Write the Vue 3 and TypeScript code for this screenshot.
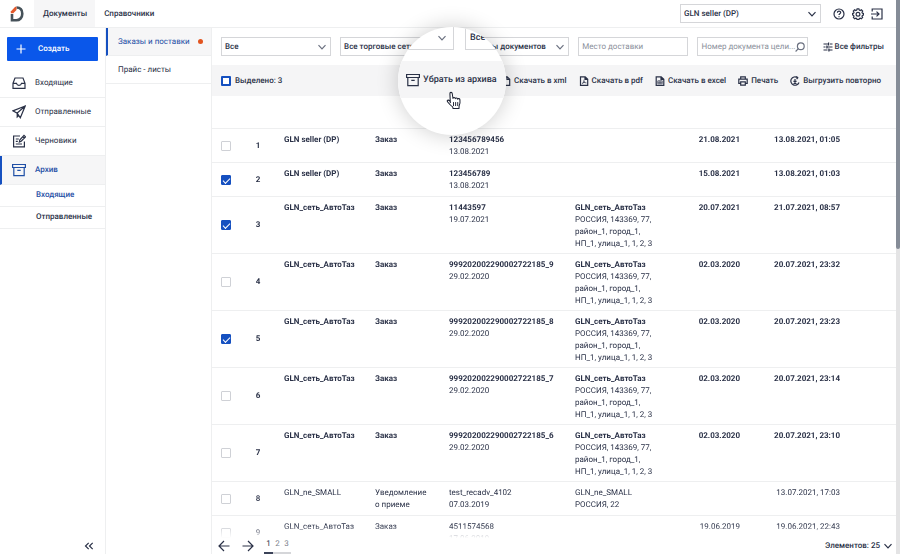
<script setup lang="ts">
import { ref } from 'vue'

interface Row {
  id: number
  checked: boolean
  unread: boolean
  sender: string
  type: string[]
  doc: string
  docDate: string
  place: string
  address: string[]
  delivery: string
  received: string
}

const net = 'GLN_сеть_АвтоТаз'
const fullAddress = ['РОССИЯ, 143369, 77,', 'район_1, город_1,', 'НП_1, улица_1, 1, 2, 3']

const rows = ref<Row[]>([
  { id: 1, checked: false, unread: true, sender: 'GLN seller (DP)', type: ['Заказ'], doc: '123456789456', docDate: '13.08.2021', place: '', address: [], delivery: '21.08.2021', received: '13.08.2021, 01:05' },
  { id: 2, checked: true, unread: true, sender: 'GLN seller (DP)', type: ['Заказ'], doc: '123456789', docDate: '13.08.2021', place: '', address: [], delivery: '15.08.2021', received: '13.08.2021, 01:03' },
  { id: 3, checked: true, unread: true, sender: net, type: ['Заказ'], doc: '11443597', docDate: '19.07.2021', place: net, address: fullAddress, delivery: '20.07.2021', received: '21.07.2021, 08:57' },
  { id: 4, checked: false, unread: true, sender: net, type: ['Заказ'], doc: '999202002290002722185_9', docDate: '29.02.2020', place: net, address: fullAddress, delivery: '02.03.2020', received: '20.07.2021, 23:32' },
  { id: 5, checked: true, unread: true, sender: net, type: ['Заказ'], doc: '999202002290002722185_8', docDate: '29.02.2020', place: net, address: fullAddress, delivery: '02.03.2020', received: '20.07.2021, 23:23' },
  { id: 6, checked: false, unread: true, sender: net, type: ['Заказ'], doc: '999202002290002722185_7', docDate: '29.02.2020', place: net, address: fullAddress, delivery: '02.03.2020', received: '20.07.2021, 23:14' },
  { id: 7, checked: false, unread: true, sender: net, type: ['Заказ'], doc: '999202002290002722185_6', docDate: '29.02.2020', place: net, address: fullAddress, delivery: '02.03.2020', received: '20.07.2021, 23:10' },
  { id: 8, checked: false, unread: false, sender: 'GLN_ne_SMALL', type: ['Уведомление', 'о приеме'], doc: 'test_recadv_4102', docDate: '07.03.2019', place: 'GLN_ne_SMALL', address: ['РОССИЯ, 22'], delivery: '', received: '13.07.2021, 17:03' },
  { id: 9, checked: false, unread: false, sender: net, type: ['Заказ'], doc: '4511574568', docDate: '17.06.2019', place: '', address: [], delivery: '19.06.2019', received: '19.06.2021, 22:43' },
])

const menu = [
  { label: 'Входящие', icon: 'inbox', active: false },
  { label: 'Отправленные', icon: 'send', active: false },
  { label: 'Черновики', icon: 'draft', active: false },
  { label: 'Архив', icon: 'archive', active: true },
]

const filters = ['Все', 'Все торговые сети', 'Все типы документов']

const actions = [
  { label: 'Скачать в xml', icon: 'file' },
  { label: 'Скачать в pdf', icon: 'pdf' },
  { label: 'Скачать в excel', icon: 'excel' },
  { label: 'Печать', icon: 'print' },
  { label: 'Выгрузить повторно', icon: 'reload' },
]
</script>

<template>
  <div class="app">
    <svg class="sprite" aria-hidden="true">
      <symbol id="i-chevron" viewBox="0 0 10 10"><path d="M1.500 3.200 5 6.800 8.500 3.200" /></symbol>
      <symbol id="i-plus" viewBox="0 0 10 10"><path d="M5 .5v9M.5 5h9" /></symbol>
      <symbol id="i-inbox" viewBox="0 0 14 14"><path d="M1 7.300 3 2h8l2 5.300v5H1zM1 7.300h3.500c.3 1.300 1.200 2 2.500 2s2.200-.7 2.500-2H13" /></symbol>
      <symbol id="i-send" viewBox="0 0 14 14"><path d="M13.200 1 .9 5.900l4.300 2.200 3.100 4.700zM13.200 1 5.200 8.100v3.900l1.700-1.500" /></symbol>
      <symbol id="i-draft" viewBox="0 0 14 14"><path d="M8 2H1.600v10.800h10.800V7.500M3.800 5h3M3.800 7.300h2M3.800 10h6.200M7.400 8l.5-2.200L12 1.400l1.500 1.500-4.300 4.300zM10.800 2.700l1.400 1.400" /></symbol>
      <symbol id="i-archive" viewBox="0 0 14 14"><path d="M.6 1.500h12.800v3H.6zM1.800 4.500h10.400v8.200H1.800zM5.300 7.300h3.400" /></symbol>
      <symbol id="i-help" viewBox="0 0 12 12"><circle cx="6" cy="6" r="5" /><path d="M4.400 4.800c0-2.100 3.300-2.100 3.300-.2C7.700 5.800 6 5.800 6 7.100M6 8.300v1" /></symbol>
      <symbol id="i-gear" viewBox="0 0 12 12"><path d="M5.100.8h1.800l.4 1.300.9.400 1.200-.7 1.300 1.300-.7 1.200.4.900 1.200.3v1.400l-1.200.5-.4.900.6 1.200-1.200 1.200-1.200-.6-.9.400-.4 1.200H5.100l-.4-1.200-.9-.4-1.200.6-1.200-1.200.6-1.200-.4-.9L.5 6.900V5.500l1.100-.3.400-.9-.7-1.200 1.300-1.300 1.200.7.900-.4z" /><circle cx="6" cy="6.200" r="1.900" /></symbol>
      <symbol id="i-exit" viewBox="0 0 12 12"><path d="M1.200 3.600V1h9.800v10H1.200V8.400M0 6h7.600M5.500 3.600 8 6 5.500 8.400" /></symbol>
      <symbol id="i-search" viewBox="0 0 10 10"><circle cx="5.800" cy="4.200" r="3.400" /><path d="M3.400 6.700.6 9.500" /></symbol>
      <symbol id="i-sliders" viewBox="0 0 10 10"><path d="M.5 2h5M7 2h2.500M5.600.5v3M.5 5h2M4 5h5.500M3.900 3.500v3M.5 8h4M6 8h3.500M5.900 6.500v3" /></symbol>
      <symbol id="i-file" viewBox="0 0 10 10"><path d="M1.500.8h4.700l2.500 2.500v6H1.500zM6 .8v2.700h2.700" /></symbol>
      <symbol id="i-pdf" viewBox="0 0 10 10"><path d="M1.500.8h4.700l2.500 2.500v6H1.500zM6 .8v2.700h2.700" /><path class="thin" d="M4.800 3.800c.5 1.600.1 2.800-1.900 4M4.900 5c.3 1.200 1.200 1.900 2.600 1.900M3.700 6.800l2.500-.4" /></symbol>
      <symbol id="i-excel" viewBox="0 0 10 10"><path d="M1.200.8h5l2.600 2.500v6H1.200zM6 .8v2.700h2.700" /><path class="thin" d="M2.800 4.800h4.400v3H2.800zM2.800 6.300h4.400M5 4.800v3" /></symbol>
      <symbol id="i-print" viewBox="0 0 10 10"><path d="M2.700 3.200V.8h4.600v2.400M2.700 7.400H.8V3.200h8.400v4.200H7.300M2.700 5.900h4.600v3.300H2.700z" /></symbol>
      <symbol id="i-reload" viewBox="0 0 10 10"><path d="M7.300 1.500A4.200 4.200 0 1 0 9 6.500M6.300.3l1.500 1.400L6.600 3.200M5 3v3M3.500 4.900 5 6.300l1.500-1.400M3.500 7.500h3" /></symbol>
      <symbol id="i-left" viewBox="0 0 12 12"><path d="M11.500 6H1M6 1 1 6l5 5" /></symbol>
      <symbol id="i-right" viewBox="0 0 12 12"><path d="M.5 6H11M6 1l5 5-5 5" /></symbol>
      <symbol id="i-collapse" viewBox="0 0 10 10"><path d="M4.700 1.800 1.500 5l3.200 3.200M8.700 1.800 5.500 5l3.200 3.200" /></symbol>
    </svg>

    <header class="top">
      <a class="logo" href="#" aria-label="D">
        <svg viewBox="0 0 14 16">
          <path d="M6.500 1.500C11 1.500 12.300 4.700 12.300 7.700c0 4-2.600 6.600-6 6.600H2V8" fill="none" stroke="#46525a" stroke-width="2.600" />
          <path d="M.8 7.200V5.500L5.200.8h1.300v3.100L3.300 7.200z" fill="#e2582b" />
        </svg>
      </a>
      <nav class="tabs">
        <a class="tab tab-active" href="#">Документы</a>
        <a class="tab" href="#">Справочники</a>
      </nav>
      <label class="field account">
        <select aria-label="GLN"><option>GLN seller (DP)</option></select>
        <svg class="icon chev"><use href="#i-chevron" /></svg>
      </label>
      <div class="tools">
        <button type="button" aria-label="?"><svg class="icon"><use href="#i-help" /></svg></button>
        <button type="button" aria-label="*"><svg class="icon"><use href="#i-gear" /></svg></button>
        <button type="button" aria-label="→"><svg class="icon"><use href="#i-exit" /></svg></button>
      </div>
    </header>

    <div class="body">
      <aside class="side">
        <button class="create" type="button">
          <svg class="icon"><use href="#i-plus" /></svg>Создать
        </button>
        <nav class="menu">
          <a v-for="m in menu" :key="m.label" href="#" class="item" :class="{ active: m.active }">
            <svg class="icon"><use :href="'#i-' + m.icon" /></svg>{{ m.label }}
          </a>
          <a href="#" class="sub sub-active">Входящие</a>
          <a href="#" class="sub">Отправленные</a>
        </nav>
        <button class="collapse" type="button" aria-label="«"><svg class="icon"><use href="#i-collapse" /></svg></button>
      </aside>

      <nav class="kinds">
        <a href="#" class="kind kind-active">Заказы и поставки<span class="dot"></span></a>
        <a href="#" class="kind">Прайс - листы</a>
      </nav>

      <main class="main">
        <form class="filters" @submit.prevent>
          <label v-for="f in filters" :key="f" class="field">
            <select :aria-label="f"><option>{{ f }}</option></select>
            <svg class="icon chev"><use href="#i-chevron" /></svg>
          </label>
          <label class="field">
            <input type="text" placeholder="Место доставки" aria-label="Место доставки" />
          </label>
          <label class="field">
            <input class="with-icon" type="text" placeholder="Номер документа цели..." aria-label="Номер документа цели..." />
            <svg class="icon search"><use href="#i-search" /></svg>
          </label>
          <button class="all" type="button"><svg class="icon"><use href="#i-sliders" /></svg>Все фильтры</button>
        </form>

        <div class="bar">
          <label class="picked">
            <input class="check partial" type="checkbox" :indeterminate="true" />Выделено: 3
          </label>
          <div class="actions">
            <button v-for="a in actions" :key="a.label" type="button">
              <svg class="icon"><use :href="'#i-' + a.icon" /></svg>{{ a.label }}
            </button>
          </div>
        </div>

        <div class="list">
          <table>
            <colgroup>
              <col class="c-check" /><col class="c-id" /><col class="c-sender" /><col class="c-type" />
              <col class="c-doc" /><col class="c-place" /><col class="c-date" /><col class="c-time" /><col />
            </colgroup>
            <tbody>
              <tr v-for="r in rows" :key="r.id" :class="{ unread: r.unread }">
                <td class="mid"><input v-model="r.checked" class="check" type="checkbox" :aria-label="String(r.id)" /></td>
                <td class="mid num">{{ r.id }}</td>
                <td class="key">{{ r.sender }}</td>
                <td class="key"><div v-for="t in r.type" :key="t">{{ t }}</div></td>
                <td><div class="key">{{ r.doc }}</div><div>{{ r.docDate }}</div></td>
                <td><div class="key">{{ r.place }}</div><div v-for="l in r.address" :key="l">{{ l }}</div></td>
                <td class="key right">{{ r.delivery }}</td>
                <td class="key right">{{ r.received }}</td>
                <td></td>
              </tr>
            </tbody>
          </table>
        </div>

        <footer class="foot">
          <button class="arrow" type="button" aria-label="←"><svg class="icon"><use href="#i-left" /></svg></button>
          <button class="arrow" type="button" aria-label="→"><svg class="icon"><use href="#i-right" /></svg></button>
          <nav class="pages">
            <a href="#" class="page page-active">1</a><a href="#" class="page">2</a><a href="#" class="page">3</a>
          </nav>
          <button class="count" type="button">Элементов: 25<svg class="icon"><use href="#i-chevron" /></svg></button>
        </footer>
      </main>
    </div>

    <div class="scroll"><div class="thumb"></div></div>

    <div class="lens">
      <div class="lens-top">
        <div class="lens-left"><svg class="icon"><use href="#i-chevron" /></svg></div>
        <div class="lens-right">Все</div>
      </div>
      <button class="lens-band" type="button"><svg class="icon"><use href="#i-archive" /></svg>Убрать из архива</button>
      <svg class="hand" viewBox="0 0 16 18">
        <path d="M5 11.500 4.600 2.600C4.500 1 6.600.8 6.800 2.400l.7 4.700c.2-1.300 2.100-1.200 2.200.2.300-1.100 2.100-.9 2.200.4.500-.9 2.100-.6 2.200.7.300 2.300.2 4.200-.8 5.900l-.1 2.200H7.500l-.3-1.500c-1.700-1-3.200-2.700-4.700-4.600C1.200 8.800 2.900 7.700 4.800 9.800" fill="#fff" stroke="#1d2233" stroke-width="1" stroke-linejoin="round" />
        <path d="M8 10.500v3.700M10 10.500v3.700M12 10.500v3.700" stroke="#1d2233" stroke-width=".9" fill="none" />
      </svg>
    </div>
  </div>
</template>

<style>
body {
  background: #fff;
}
</style>

<style scoped>
.app {
  position: relative;
  display: grid;
  grid-template: auto minmax(0, 1fr) / minmax(0, 1fr) 4px;
  height: 100vh;
  overflow: hidden;
  font: 500 8px/12px Roboto, "Liberation Sans", sans-serif;
  text-rendering: geometricPrecision;
  color: #2a3147;
}
.app *,
.app {
  box-sizing: border-box;
}
.sprite {
  position: absolute;
  width: 0;
  height: 0;
}
button,
input,
select {
  font: inherit;
  color: inherit;
  text-rendering: inherit;
  margin: 0;
  padding: 0;
  border: 0;
  background: none;
}
a {
  color: inherit;
  text-decoration: none;
}
.icon {
  width: 10px;
  height: 10px;
  flex: none;
  fill: none;
  stroke: currentColor;
  stroke-width: 1.2;
}
.thin {
  stroke-width: .7;
}

.top {
  display: flex;
  align-items: center;
  height: 28px;
  padding-right: 13px;
  border-bottom: 1px solid #eeeff0;
}
.logo {
  width: 34px;
  padding-left: 10px;
}
.logo svg {
  display: block;
  width: 14px;
  height: 16px;
}
.tabs {
  display: flex;
  align-self: stretch;
}
.tab {
  display: flex;
  align-items: center;
  padding: 0 8px 0 9px;
}
.tab-active {
  background: #f6f6f7;
}
.account {
  width: 141px;
  margin-left: auto;
}
.account select {
  padding-left: 5px;
}
.account .chev {
  color: #2a3147;
}
.tools {
  display: flex;
  gap: 7px;
  margin-left: 12px;
}
.tools button {
  display: flex;
}
.tools .icon {
  width: 12px;
  height: 12px;
}

.field {
  display: grid;
  align-items: center;
  min-width: 0;
}
.field > * {
  grid-area: 1 / 1;
}
.field select,
.field input {
  appearance: none;
  width: 100%;
  height: 19px;
  padding-left: 3px;
  border: 1px solid #d5d6d9;
  border-radius: 0;
  background: #fff;
}
.field input::placeholder {
  color: #8b909b;
  font-weight: 400;
  opacity: 1;
}
.field .with-icon {
  padding-right: 11px;
}
.chev,
.search {
  justify-self: end;
  margin-right: 4px;
  color: #6b7180;
  pointer-events: none;
}
.search {
  margin-right: 3px;
}

.body {
  grid-row: 2;
  display: grid;
  grid-template-columns: 106px 106px minmax(0, 1fr);
  min-height: 0;
}
.side {
  display: flex;
  flex-direction: column;
  padding-top: 9px;
  border-right: 1px solid #eeeff0;
}
.create {
  display: flex;
  align-items: center;
  gap: 12px;
  height: 24px;
  margin: 0 7px 8px;
  padding-left: 9px;
  border-radius: 1px;
  background: #0a57ea;
  color: #fff;
}
.item {
  display: flex;
  align-items: center;
  gap: 9px;
  height: 29px;
  padding-left: 12px;
  border-bottom: 1px solid #eeeff0;
  font-weight: 400;
}
.item .icon {
  width: 14px;
  height: 14px;
}
.active {
  padding-left: 10px;
  border-left: 2px solid #1550c0;
  background: #f6f6f7;
  color: #1f4fa6;
  font-weight: 500;
}
.sub {
  display: block;
  padding: 4px 0 5px 36px;
  border-bottom: 1px solid #eeeff0;
}
.sub-active {
  color: #1f4fa6;
}
.collapse {
  display: flex;
  align-self: flex-end;
  margin: auto 11px 3px 0;
}

.kinds {
  border-right: 1px solid #eeeff0;
}
.kind {
  display: flex;
  align-items: center;
  justify-content: space-between;
  height: 28px;
  padding: 0 8px 0 12px;
  border-bottom: 1px solid #eeeff0;
  font-weight: 400;
}
.kind-active {
  padding-left: 10px;
  border-left: 2px solid #1550c0;
  background: #f6f6f7;
  color: #1f4fa6;
}
.dot {
  width: 5px;
  height: 5px;
  border-radius: 50%;
  background: #e2541f;
}

.main {
  display: flex;
  flex-direction: column;
  min-width: 0;
  min-height: 0;
}
.filters {
  display: grid;
  grid-template-columns: repeat(5, minmax(0, 1fr)) auto;
  gap: 9px;
  padding: 9px 12px 9px 9px;
}
.all {
  display: flex;
  align-items: center;
  gap: 2px;
  padding-left: 6px;
}
.bar {
  display: flex;
  align-items: center;
  justify-content: space-between;
  height: 31px;
  padding: 0 15px 0 9px;
  background: #f5f5f6;
}
.picked {
  display: flex;
  align-items: center;
  gap: 4px;
}
.actions {
  display: flex;
  gap: 12px;
}
.actions button {
  display: flex;
  align-items: center;
  gap: 3px;
}
.check {
  appearance: none;
  display: block;
  width: 10px;
  height: 10px;
  border: 1px solid #cfd1d6;
  border-radius: 1px;
  background: #fff;
}
.check:checked {
  border-color: #1550c0;
  background: #1550c0;
}
.check:checked::after {
  content: "";
  display: block;
  width: 6px;
  height: 3px;
  margin: 2px 1px;
  border: solid #fff;
  border-width: 0 0 1px 1px;
  transform: rotate(-45deg);
}
.partial {
  border: 2px solid #1550c0;
}

.list {
  flex: 1;
  min-height: 0;
  padding-top: 32px;
  overflow: hidden;
  mask-image: linear-gradient(to top, transparent, #000 12px);
}
table {
  width: 100%;
  table-layout: fixed;
  border-collapse: separate;
  border-spacing: 0;
  border-top: 1px solid #eeeff0;
  font-weight: 400;
}
.c-check {
  width: 28px;
}
.c-id {
  width: 36px;
}
.c-sender {
  width: 91px;
}
.c-type {
  width: 74px;
}
.c-doc {
  width: 126px;
}
.c-place {
  width: 103px;
}
.c-date {
  width: 78px;
}
.c-time {
  width: 100px;
}
td {
  height: 34px;
  padding: 5px 0 3px 8px;
  border-bottom: 1px solid #eeeff0;
  vertical-align: top;
  white-space: nowrap;
}
td.mid {
  padding: 0 0 0 9px;
  vertical-align: middle;
}
td.num {
  padding: 0;
  text-align: center;
  font-weight: 500;
}
td.right {
  padding-right: 8px;
  padding-left: 0;
  text-align: right;
}
.unread .key,
.unread .num {
  font-weight: 700;
}

.foot {
  display: flex;
  align-items: center;
  height: 16px;
  padding: 0 3px 0 6px;
}
.arrow {
  display: flex;
  margin-right: 12px;
}
.arrow .icon {
  width: 12px;
  height: 12px;
}
.pages {
  display: flex;
  align-self: stretch;
  margin-left: -2px;
}
.page {
  width: 9px;
  border-bottom: 2px solid #d5d6d9;
  color: #7b808c;
  font-weight: 400;
  text-align: center;
}
.page-active {
  border-color: #3b4258;
  color: #2a3147;
}
.count {
  display: flex;
  align-items: center;
  gap: 3px;
  margin-left: auto;
}

.scroll {
  grid-area: 1 / 2 / 3 / 3;
  background: #e4e4e5;
}
.thumb {
  height: 45%;
  border-radius: 0 0 2px 2px;
  background: #858c97;
}

.lens {
  position: absolute;
  top: 27px;
  left: 398px;
  width: 108px;
  height: 108px;
  overflow: hidden;
  border-radius: 50%;
  background: #fff;
  box-shadow: 0 0 22px rgba(0, 0, 0, .2);
  font-size: 9px;
}
.lens-top {
  display: flex;
  gap: 11px;
  height: 23px;
  margin-bottom: 11px;
}
.lens-left,
.lens-right {
  display: flex;
  align-items: center;
  width: 56px;
  border: solid #d5d6d9;
  border-width: 0 1px 1px;
}
.lens-left {
  flex: none;
  justify-content: flex-end;
  padding-right: 6px;
  color: #6b7180;
}
.lens-right {
  padding-left: 4px;
}
.lens-band {
  display: flex;
  align-items: center;
  gap: 3px;
  width: 100%;
  height: 37px;
  padding-left: 8px;
  background: #f5f5f6;
  white-space: nowrap;
}
.lens-band .icon {
  width: 14px;
  height: 14px;
}
.hand {
  position: absolute;
  top: 64px;
  left: 47px;
  width: 17px;
  height: 19px;
}
</style>
